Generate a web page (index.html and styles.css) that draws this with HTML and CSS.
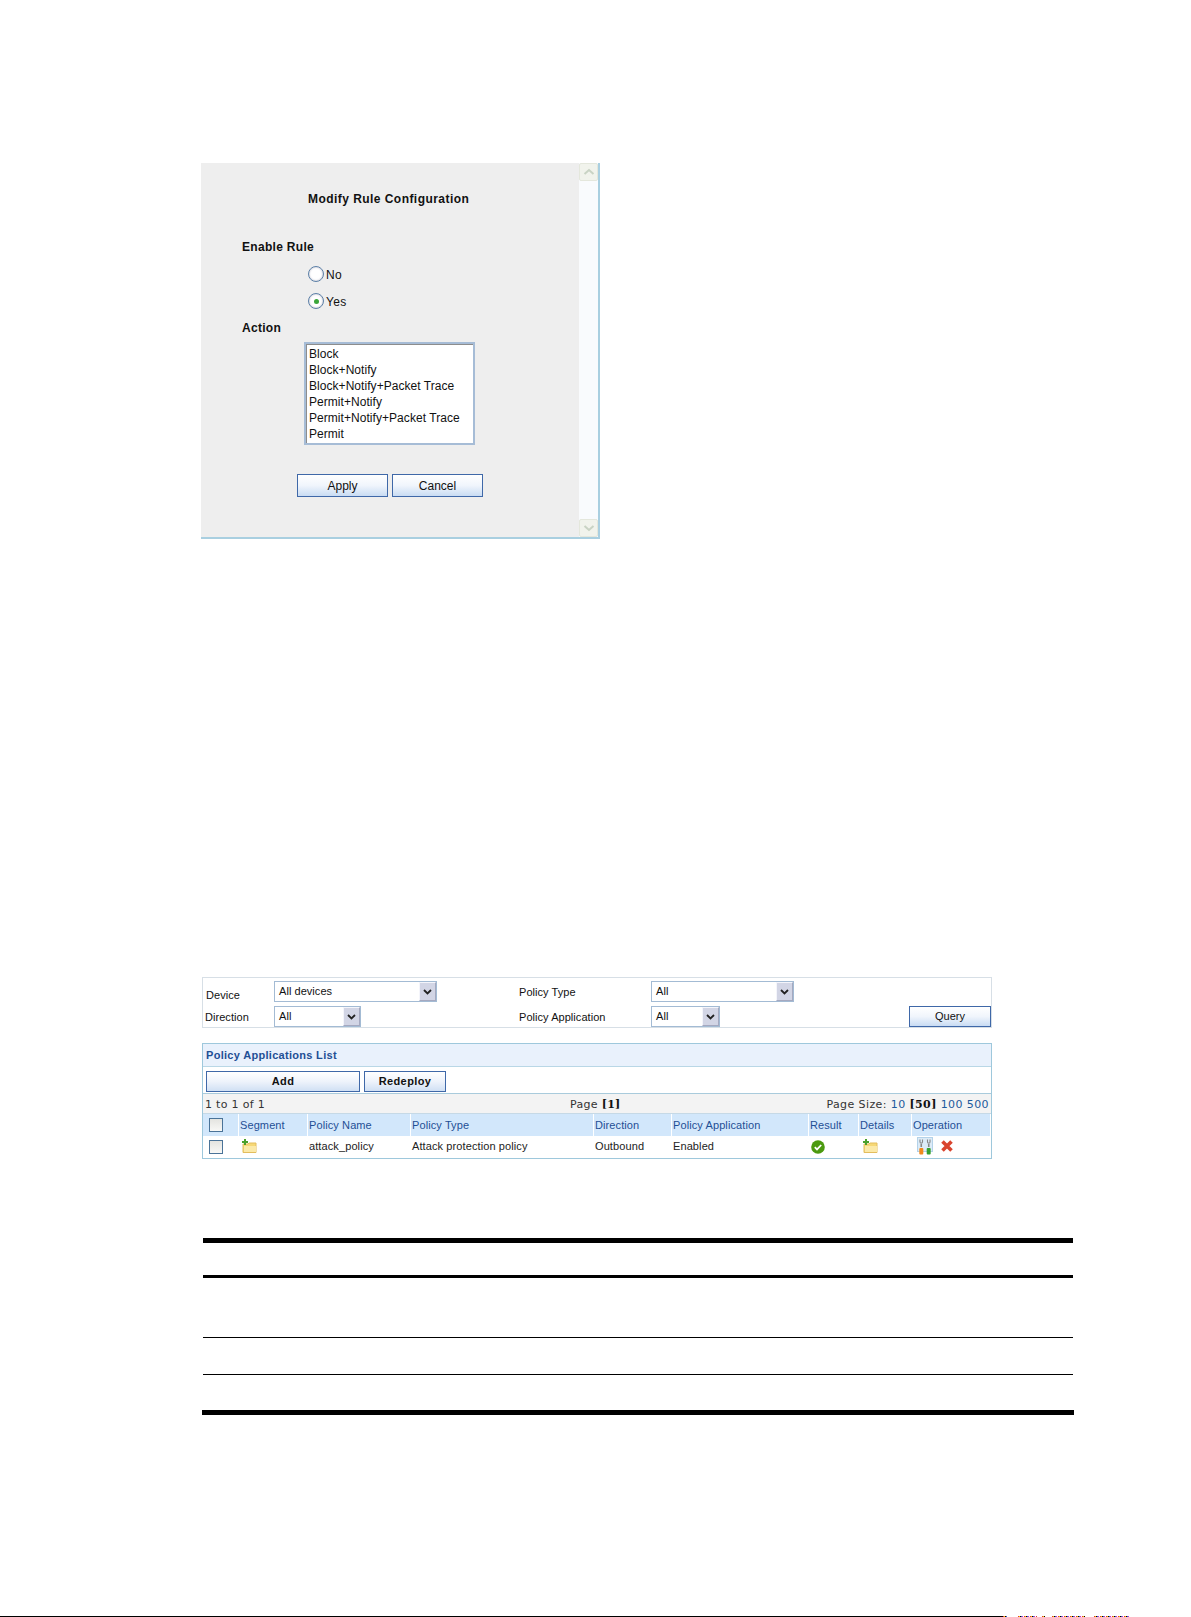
FILE: index.html
```html
<!DOCTYPE html>
<html lang="en">
<head>
<meta charset="utf-8">
<title>Policy Applications</title>
<link rel="stylesheet" href="styles.css">
</head>
<body>
<main class="page">
  <section class="dialog">
    <div class="dialog-body">
      <h2 class="dialog-title">Modify Rule Configuration</h2>
      <h3 class="field-title first">Enable Rule</h3>
      <div class="radio-row"><span class="radio"></span><span>No</span></div>
      <div class="radio-row yes"><span class="radio checked"></span><span>Yes</span></div>
      <h3 class="field-title action">Action</h3>
      <div class="listbox">
        <div>Block</div>
        <div>Block+Notify</div>
        <div>Block+Notify+Packet Trace</div>
        <div>Permit+Notify</div>
        <div>Permit+Notify+Packet Trace</div>
        <div>Permit</div>
      </div>
      <div class="dialog-buttons">
        <button class="btn dialog-btn">Apply</button>
        <button class="btn dialog-btn">Cancel</button>
      </div>
    </div>
    <div class="scrollbar">
      <span class="scroll-btn"><svg width="12" height="8" viewBox="0 0 12 8"><path d="M1.500 6 6 2l4.500 4" fill="none" stroke="#c9d3c4" stroke-width="2"/></svg></span>
      <span class="scroll-btn"><svg width="12" height="8" viewBox="0 0 12 8"><path d="M1.500 2 6 6l4.500-4" fill="none" stroke="#c9d3c4" stroke-width="2"/></svg></span>
    </div>
  </section>

  <section class="filter">
    <div class="filter-col labels">
      <span class="lbl device">Device</span>
      <span class="lbl direction">Direction</span>
    </div>
    <div class="filter-col selects">
      <div class="select s-device"><span>All devices</span><i class="arrow"><svg width="9" height="6" viewBox="0 0 9 6"><path d="M1 1l3.500 3.500L8 1" fill="none" stroke="#222" stroke-width="1.800"/></svg></i></div>
      <div class="select s-small"><span>All</span><i class="arrow"><svg width="9" height="6" viewBox="0 0 9 6"><path d="M1 1l3.500 3.500L8 1" fill="none" stroke="#222" stroke-width="1.800"/></svg></i></div>
    </div>
    <div class="filter-col labels2">
      <span class="lbl">Policy Type</span>
      <span class="lbl">Policy Application</span>
    </div>
    <div class="filter-col selects">
      <div class="select s-type"><span>All</span><i class="arrow"><svg width="9" height="6" viewBox="0 0 9 6"><path d="M1 1l3.500 3.500L8 1" fill="none" stroke="#222" stroke-width="1.800"/></svg></i></div>
      <div class="select s-small2"><span>All</span><i class="arrow"><svg width="9" height="6" viewBox="0 0 9 6"><path d="M1 1l3.500 3.500L8 1" fill="none" stroke="#222" stroke-width="1.800"/></svg></i></div>
    </div>
    <button class="btn query">Query</button>
  </section>

  <section class="list">
    <div class="list-title">Policy Applications List</div>
    <div class="list-actions">
      <button class="btn strong add">Add</button>
      <button class="btn strong redeploy">Redeploy</button>
    </div>
    <div class="pager">
      <span>1 to 1 of 1</span>
      <span class="pager-mid">Page <b>[1]</b></span>
      <span class="pager-size">Page Size: <a>10</a> <b>[50]</b> <a>100</a> <a>500</a></span>
    </div>
    <div class="grid head">
      <div class="cell"><span class="check"></span></div>
      <div class="cell">Segment</div>
      <div class="cell">Policy Name</div>
      <div class="cell">Policy Type</div>
      <div class="cell">Direction</div>
      <div class="cell">Policy Application</div>
      <div class="cell">Result</div>
      <div class="cell">Details</div>
      <div class="cell">Operation</div>
    </div>
    <div class="grid row">
      <div class="cell"><span class="check"></span></div>
      <div class="cell"><svg class="folder seg" width="16" height="14" viewBox="0 0 16 14"><path d="M3 5h4l1-1h7v9.500H2V5z" fill="#f6d877" stroke="#e3bd5e"/><path d="M3 7h12v6H3z" fill="#fbe9a8"/><path d="M3 0h2v2h2v2H5v2H3V4H1V2h2z" fill="#4aa02c"/></svg></div>
      <div class="cell">attack_policy</div>
      <div class="cell">Attack protection policy</div>
      <div class="cell">Outbound</div>
      <div class="cell">Enabled</div>
      <div class="cell"><svg class="ok" width="14" height="14" viewBox="0 0 14 14"><circle cx="7" cy="7" r="6.800" fill="#4c9a10"/><path d="M3.800 7.200 6 9.400l4.200-4.400" fill="none" stroke="#fff" stroke-width="1.800"/></svg></div>
      <div class="cell"><svg class="folder det" width="16" height="14" viewBox="0 0 16 14"><path d="M3 5h4l1-1h7v9.500H2V5z" fill="#f6d877" stroke="#e3bd5e"/><path d="M3 7h12v6H3z" fill="#fbe9a8"/><path d="M3 0h2v2h2v2H5v2H3V4H1V2h2z" fill="#4aa02c"/></svg></div>
      <div class="cell ops">
        <svg class="tool" width="16" height="18" viewBox="0 0 16 18"><rect x=".5" y=".5" width="15" height="14" fill="#dcebf7" stroke="#b4d2e9"/><path d="M3 2.500v2.500c0 1.500 2.500 1.500 2.500 0V2.500M10.500 2.500v2.500c0 1.500 2.500 1.500 2.500 0V2.500" fill="none" stroke="#888" stroke-width="1.100"/><path d="M4.250 7v3M11.750 7v3" stroke="#888" stroke-width="1.600"/><rect x="2.300" y="11" width="4" height="6.500" rx="1" fill="#f18a1c"/><rect x="9.700" y="11" width="4" height="6.500" rx="1" fill="#34a02e"/></svg>
        <svg class="del" width="14" height="14" viewBox="0 0 14 14"><path d="M2.500 2.500l9 9M11.500 2.500l-9 9" stroke="#d9442e" stroke-width="3.600"/></svg>
      </div>
    </div>
  </section>

  <section class="rules">
    <div class="rule-row r1"></div>
    <div class="rule-row r2"></div>
    <div class="rule-row r3"></div>
    <div class="rule-row r4"></div>
  </section>
</main>
<footer class="edge">
  <span class="edge-line"></span>
  <span class="noise n1"></span>
  <span class="noise n2"></span>
  <span class="noise n3"></span>
  <span class="noise n4"></span>
  <span class="noise n5"></span>
</footer>
</body>
</html>
```
FILE: styles.css
```css
* { box-sizing: border-box; }
html, body { margin: 0; padding: 0; background: #fff; }
body { height: 1617px; overflow: hidden; position: relative; font-family: "Liberation Sans", Arial, sans-serif; color: #111; }
.page { padding: 163px 0 0 201px; }

.dialog { width: 399px; height: 376px; display: flex; background: #eee; border-right: 2px solid #a9cfe0; border-bottom: 2px solid #a9cfe0; }
.dialog-body { width: 378px; padding-top: 29px; font-size: 12px; }
.dialog-title { margin: 0 0 0 107px; font-size: 12px; line-height: 14px; font-weight: bold; letter-spacing: .45px; }
.field-title { margin: 0 0 0 41px; font-size: 12px; line-height: 14px; font-weight: bold; letter-spacing: .3px; }
.field-title.first { margin-top: 34px; }
.field-title.action { margin-top: 11px; }
.radio-row { display: flex; align-items: center; gap: 2px; margin: 13px 0 0 107px; height: 16px; letter-spacing: .3px; }
.radio-row.yes { margin-top: 11px; }
.radio { width: 16px; height: 16px; border-radius: 50%; background: #fff; border: 1px solid #5b7fa6; box-shadow: inset 0 0 2px #aab; position: relative; top: -1px; }
.radio.checked::after { content: ""; position: absolute; left: 4.500px; top: 4.500px; width: 5px; height: 5px; border-radius: 50%; background: #3aa63a; }
.listbox { width: 171px; height: 103px; margin: 7px 0 0 103px; padding: 2px 0 0 3px; background: #fff; border: 2px solid #a6bcd6; box-shadow: inset 1px 1px 0 #8d8d8d; font-size: 12px; line-height: 16px; letter-spacing: .05px; }
.dialog-buttons { display: flex; gap: 4px; margin: 29px 0 0 96px; }
.btn { display: block; padding: 0; border: 1px solid #3f68a8; background: linear-gradient(#fff, #f0f5fc 50%, #c9dcf3); font: 12px/1 "Liberation Sans", Arial, sans-serif; color: #111; }
.dialog-btn { width: 91px; height: 23px; }
.scrollbar { width: 19px; display: flex; flex-direction: column; justify-content: space-between; background: #f9fbfd; }
.scroll-btn { height: 18px; display: flex; align-items: center; justify-content: center; background: #f1f3ec; border: 1px solid #e4e7dc; border-radius: 2px; }

.filter { position: relative; display: flex; width: 790px; height: 51px; margin: 438px 0 0 1px; border: 1px solid #d7dfe6; font-size: 11px; letter-spacing: .05px; }
.filter-col { display: flex; flex-direction: column; }
.lbl { line-height: 13px; }
.labels { width: 71px; padding: 11px 0 0 3px; gap: 9px; }
.labels .direction { margin-left: -1px; }
.selects { gap: 4px; padding-top: 3px; }
.labels2 { width: 132px; margin-left: 82px; padding: 8px 0 0 0; gap: 12px; }
.select { height: 21px; display: flex; justify-content: space-between; background: #fff; border: 1px solid #a3bbd4; line-height: 16px; padding-left: 4px; }
.select span { padding-top: 1px; }
.s-device { width: 163px; }
.s-small { width: 87px; }
.s-type { width: 143px; }
.s-small2 { width: 69px; }
.arrow { width: 17px; height: 19px; display: flex; align-items: center; justify-content: center; background: #d2d5e5; border: 1px solid #f4f5fb; border-right-color: #a5a9c0; border-bottom-color: #a5a9c0; }
.query { position: absolute; left: 706px; top: 28px; width: 82px; height: 21px; font-size: 11px; }

.list { width: 790px; height: 116px; margin: 15px 0 0 1px; border: 1px solid #9ec8dc; font-size: 11px; letter-spacing: .1px; }
.list-title { height: 23px; padding: 5px 0 0 3px; background: #e9f1fc; border-bottom: 1px solid #b9d7e6; color: #1f4f95; font-weight: bold; line-height: 13px; letter-spacing: .3px; }
.list-actions { height: 27px; display: flex; gap: 4px; padding: 4px 0 0 3px; border-bottom: 1px solid #a9cbdc; }
.strong { height: 21px; background: linear-gradient(#fff, #eef3fb 50%, #d0e0f4); font-size: 11px; font-weight: bold; letter-spacing: .4px; }
.add { width: 154px; }
.redeploy { width: 82px; }
.pager { position: relative; height: 20px; display: flex; justify-content: space-between; padding: 4px 2px 0 2px; background: #f3f3f3; border-bottom: 1px solid #c6d9e6; font-family: "DejaVu Sans", sans-serif; font-size: 11px; line-height: 13px; letter-spacing: .3px; color: #333; }
.pager b { color: #111; font-family: "DejaVu Serif", serif; }
.pager a { color: #1d5a9c; }
.pager-size { letter-spacing: .4px; }
.pager-mid { position: absolute; left: 367px; }
.grid { display: grid; grid-template-columns: 36px 69px 103px 183px 78px 137px 50px 53px 1fr; }
.head { height: 22px; }
.head .cell { margin-right: 1px; background: #d2e7fb; color: #1f4f95; padding: 5px 0 0 1px; line-height: 13px; }
.row { height: 22px; }
.row .cell { padding: 4px 0 0 1px; line-height: 13px; color: #222; }
.check { display: block; width: 14px; height: 14px; margin: 0 0 0 5px; background: linear-gradient(#e4e4e0, #f8f8f6); border: 1px solid #4a7398; }
.head .cell:first-child { padding-top: 4px; }
.row .cell:first-child { padding-top: 4px; }
.folder { display: block; margin-top: -1px; }
.seg { margin-left: 1px; }
.det { margin-left: 2px; }
.ok { display: block; margin-left: 1px; }
.ops { display: flex; gap: 7px; }
.tool { display: block; margin: -3px 0 0 4px; }
.del { display: block; margin-top: -1px; }

.rules { width: 870px; margin: 79px 0 0 2px; }
.rule-row { border-bottom: 1px solid #000; }
.r1 { height: 40px; border-top: 5px solid #000; border-bottom-width: 3px; }
.r2 { height: 60px; }
.r3 { height: 37px; }
.r4 { height: 40px; margin: 0 -1px; border-bottom-width: 5px; }

.edge { position: absolute; left: 0; bottom: 0; width: 100%; height: 1px; display: flex; }
.edge-line { width: 1003px; background: #000; }
.noise { background: repeating-linear-gradient(90deg, #d33 0 1px, #fc0 1px 2px, #000 2px 3px, #36c 3px 4px, #c3c 4px 5px, #fff 5px 6px); }
.n1 { width: 4px; }
.n2 { width: 19px; margin-left: 11px; }
.n3 { width: 3px; margin-left: 5px; }
.n4 { width: 33px; margin-left: 7px; }
.n5 { width: 35px; margin-left: 9px; }
```
